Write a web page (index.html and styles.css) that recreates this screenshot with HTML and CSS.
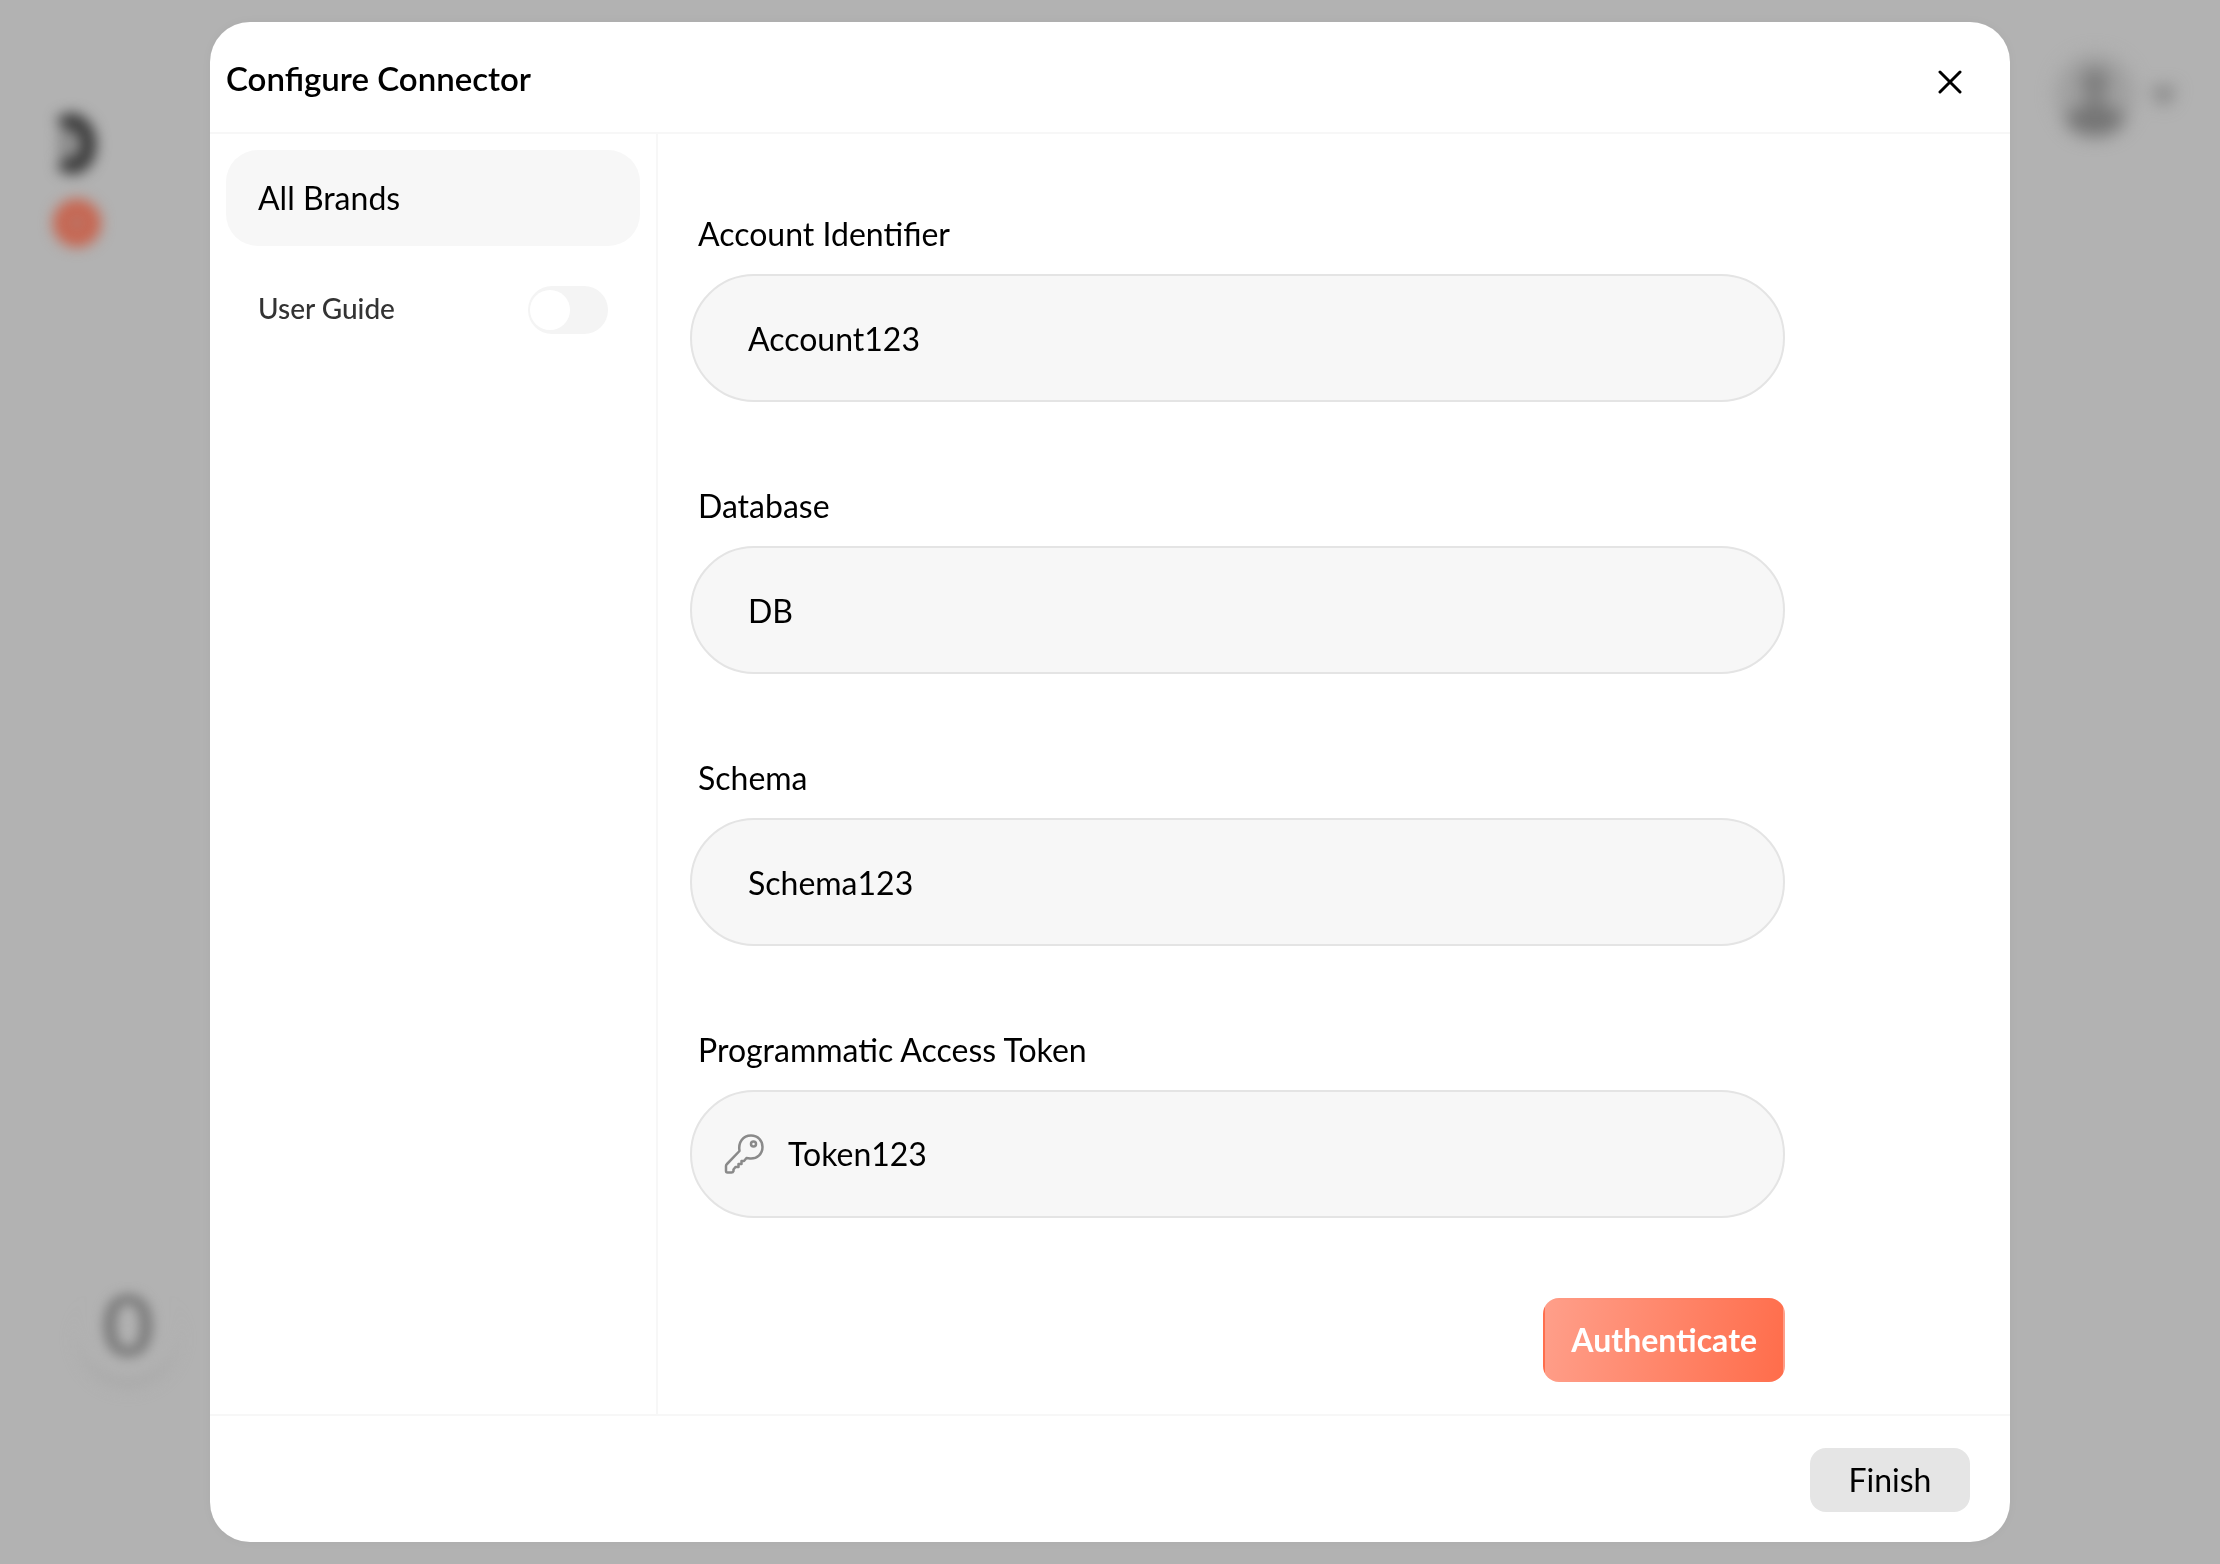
FILE: index.html
```html
<!DOCTYPE html>
<html lang="en">

<head>
    <meta charset="UTF-8">
    <meta name="viewport" content="width=device-width, initial-scale=1.0">
    <title>Configure Connector</title>
    <link rel="stylesheet" href="styles.css">
</head>

<body>

    <!-- Page behind the modal -->
    <div class="page" aria-hidden="true">
        <div class="page-left">
            <svg class="page-logo" viewBox="0 0 80 150" width="80" height="150">
                <path d="M22 26 C32 15 48 26 48 44 C48 62 34 72 22 61" fill="none" stroke="#3a3a3a" stroke-width="17"/>
                <path d="M18 30 H34 V58 H18 Z" fill="#8a8a8a"/>
                <circle cx="37" cy="123" r="17" fill="#bd7364" stroke="#c8634d" stroke-width="14"/>
            </svg>
            <div class="page-count">0</div>
        </div>
        <svg class="page-user" viewBox="0 0 150 100" width="150" height="100">
            <circle cx="45" cy="46" r="40" fill="#a0a0a0"/>
            <circle cx="45" cy="34" r="14" fill="#7c7c7c"/>
            <path d="M38 40 H52 V64 H38 Z" fill="#7c7c7c"/>
            <path d="M14 72 C22 52 68 52 76 72 C64 94 26 94 14 72 Z" fill="#747474"/>
            <path d="M101 40 H126 L114 58 Z" fill="#747474"/>
        </svg>
    </div>

    <!-- Modal -->
    <div class="overlay">
        <div class="modal" role="dialog" aria-labelledby="modal-title">
            <header class="modal-header">
                <h1 id="modal-title">Configure Connector</h1>
                <button type="button" class="close-btn" aria-label="Close">
                    <svg viewBox="0 0 24 24" width="24" height="24" fill="none" stroke="#000" stroke-width="3" stroke-linecap="round">
                        <path d="M2 2 L22 22 M22 2 L2 22"/>
                    </svg>
                </button>
            </header>

            <div class="modal-body">
                <aside class="sidebar">
                    <button type="button" class="brand-item">All Brands</button>
                    <div class="guide-row">
                        <label for="user-guide">User Guide</label>
                        <input type="checkbox" id="user-guide" class="toggle">
                    </div>
                </aside>

                <form class="connector-form">
                    <div class="field">
                        <label for="account">Account Identifier</label>
                        <input type="text" id="account" value="Account123">
                    </div>
                    <div class="field">
                        <label for="database">Database</label>
                        <input type="text" id="database" value="DB">
                    </div>
                    <div class="field">
                        <label for="schema">Schema</label>
                        <input type="text" id="schema" value="Schema123">
                    </div>
                    <div class="field">
                        <label for="token">Programmatic Access Token</label>
                        <div class="token-box">
                            <svg viewBox="0 0 40 40" width="40" height="40" fill="none" stroke="#8a8a8a" stroke-width="2.5" stroke-linejoin="round">
                                <path d="M15.5 17 C14 8 19 1.5 27 1.5 C34 1.5 38.5 6.5 38.5 13 C38.5 20 33 25 26 24.5 L22.5 24 L20 27 H17.5 V30 H14.5 V33 H11.5 L9.5 35.5 V37 Q9 38.5 7.5 38.5 H3.5 Q2 38.5 2 37 V32 Q2 31 3 30 Z"/>
                                <circle cx="29.5" cy="10" r="2.5"/>
                            </svg>
                            <input type="text" id="token" value="Token123">
                        </div>
                    </div>
                    <button type="submit" class="auth-btn">Authenticate</button>
                </form>
            </div>

            <footer class="modal-footer">
                <button type="button" class="finish-btn">Finish</button>
            </footer>
        </div>
    </div>

</body>

</html>
```
FILE: styles.css
```css
/* Global styles */
* {
    box-sizing: border-box;
}

body {
    font-family: Lato, sans-serif;
    font-size: 32px;
    line-height: 44px;
    background-color: #b2b2b2;
    color: #000;
    margin: 0;
    overflow: hidden;
}

button, input {
    font: inherit;
    color: inherit;
}

button {
    border: none;
    cursor: pointer;
}

/* Page behind the modal */
.page {
    display: flex;
    justify-content: space-between;
    align-items: flex-start;
    height: 100vh;
}

.page-left {
    display: flex;
    flex-direction: column;
    justify-content: space-between;
    height: 100%;
    padding: 100px 0 186px 40px;
}

.page-logo, .page-user {
    filter: blur(7px);
    overflow: visible;
}

.page-user {
    margin: 48px 20px 0 0;
    filter: blur(9px);
}

.page-count {
    width: 104px;
    height: 104px;
    margin-left: 36px;
    border-radius: 50%;
    font-family: Inter, sans-serif;
    font-size: 84px;
    font-weight: 700;
    line-height: 104px;
    text-align: center;
    color: #7c7c7c;
    box-shadow: 0 12px 12px -4px #a8a8a8;
    filter: blur(6px);
}

/* Modal */
.overlay {
    position: fixed;
    inset: 0;
    display: flex;
    justify-content: center;
    padding: 22px 16px;
}

.modal {
    display: flex;
    flex-direction: column;
    width: 100%;
    max-width: 1800px;
    background-color: #fff;
    border-radius: 40px;
    box-shadow: 0 0 12px rgba(0, 0, 0, 0.03);
    overflow: auto;
}

.modal-header {
    display: flex;
    justify-content: space-between;
    padding: 34px 40px 32px 16px;
    border-bottom: 2px solid #f7f7f7;
}

h1 {
    margin: 0;
    font-size: 33px;
    font-weight: 600;
}

.close-btn {
    display: flex;
    align-items: flex-end;
    height: 44px;
    padding: 6px 8px;
    background: none;
}

.modal-body {
    display: flex;
    flex: 1;
}

/* Sidebar */
.sidebar {
    flex: 0 0 448px;
    padding: 16px;
    border-right: 2px solid #f7f7f7;
}

.brand-item {
    width: 100%;
    height: 96px;
    padding: 0 32px;
    text-align: left;
    background-color: #f7f7f7;
    border-radius: 32px;
}

.guide-row {
    display: flex;
    justify-content: space-between;
    align-items: center;
    padding: 40px 32px;
    font-size: 28px;
    font-weight: 500;
    line-height: 40px;
    color: #333;
}

.guide-row label {
    padding-bottom: 4px;
}

.toggle {
    appearance: none;
    width: 80px;
    height: 48px;
    margin: 0;
    padding: 4px 2px;
    background-color: #f4f4f4;
    border-radius: 24px;
}

.toggle::before {
    content: "";
    display: block;
    width: 40px;
    height: 40px;
    background-color: #fff;
    border-radius: 50%;
}

.toggle:checked::before {
    margin-left: 36px;
}

/* Form */
.connector-form {
    display: flex;
    flex: 1;
    flex-direction: column;
    gap: 80px;
    padding: 76px 12.5% 32px 32px;
}

.field {
    display: flex;
    flex-direction: column;
    gap: 18px;
}

.field label {
    padding: 2px 0 0 8px;
}

.field > input, .token-box {
    width: 100%;
    height: 128px;
    padding: 0 56px;
    background-color: #f7f7f7;
    border: 2px solid #e4e4e4;
    border-radius: 64px;
}

.token-box {
    display: flex;
    align-items: center;
    gap: 24px;
    padding-left: 32px;
}

.token-box input {
    flex: 1;
    padding: 0;
    background: none;
    border: none;
}

/* Buttons */
.auth-btn {
    align-self: flex-end;
    height: 84px;
    padding: 0 26px;
    background: linear-gradient(100deg, #ff9f8a, #ff6d4b);
    border: 2px solid transparent;
    border-radius: 16px;
    color: #fff;
    font-weight: bold;
}

.modal-footer {
    display: flex;
    justify-content: flex-end;
    padding: 32px 40px 30px;
    border-top: 2px solid #f7f7f7;
}

.finish-btn {
    width: 160px;
    height: 64px;
    background-color: #e5e5e5;
    border-radius: 16px;
}
```
